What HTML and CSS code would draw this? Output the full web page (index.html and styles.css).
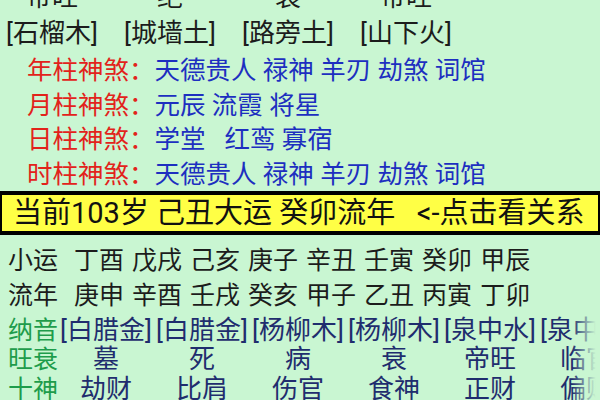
FILE: index.html
```html
<!DOCTYPE html>
<html lang="zh-CN">
<head>
<meta charset="utf-8">
<link rel="stylesheet" href="styles.css">
</head>
<body>
<div class="page">
  <div class="cols cols-top">
    <span>帝旺</span><span>绝</span><span>衰</span><span>帝旺</span>
  </div>
  <div class="cols cols-nayin">
    <span>[石榴木]</span><span>[城墙土]</span><span>[路旁土]</span><span>[山下火]</span>
  </div>

  <div class="shensha">
    <div class="ss-row"><span class="ss-label">年柱神煞：</span><span class="ss-val">天德贵人 禄神 羊刃 劫煞 词馆</span></div>
    <div class="ss-row"><span class="ss-label">月柱神煞：</span><span class="ss-val">元辰 流霞 将星</span></div>
    <div class="ss-row"><span class="ss-label">日柱神煞：</span><span class="ss-val">学堂&nbsp;&nbsp; 红鸾 寡宿</span></div>
    <div class="ss-row"><span class="ss-label">时柱神煞：</span><span class="ss-val">天德贵人 禄神 羊刃 劫煞 词馆</span></div>
  </div>

  <div class="band">当前103岁 己丑大运 癸卯流年&nbsp;&nbsp; &lt;-点击看关系</div>

  <div class="seq seq-first">
    <span class="seq-label">小运</span><span>丁酉</span><span>戊戌</span><span>己亥</span><span>庚子</span><span>辛丑</span><span>壬寅</span><span>癸卯</span><span>甲辰</span>
  </div>
  <div class="seq">
    <span class="seq-label">流年</span><span>庚申</span><span>辛酉</span><span>壬戌</span><span>癸亥</span><span>甲子</span><span>乙丑</span><span>丙寅</span><span>丁卯</span>
  </div>

  <div class="table-wrap">
    <div class="trow">
      <span class="tlabel">纳音</span><span>[白腊金]</span><span>[白腊金]</span><span>[杨柳木]</span><span>[杨柳木]</span><span>[泉中水]</span><span>[泉中水]</span>
    </div>
    <div class="trow">
      <span class="tlabel">旺衰</span><span>墓</span><span>死</span><span>病</span><span>衰</span><span>帝旺</span><span>临官</span>
    </div>
    <div class="trow">
      <span class="tlabel">十神</span><span>劫财</span><span>比肩</span><span>伤官</span><span>食神</span><span>正财</span><span>偏财</span>
    </div>
  </div>
</div>
</body>
</html>
```

FILE: styles.css
```css
html, body {
  margin: 0;
  padding: 0;
}
body {
  width: 600px;
  height: 400px;
  overflow: hidden;
  background: #c9f6d2;
  font-family: Roboto, "Noto Sans CJK SC", sans-serif;
  color: #1c1c1c;
}
.page {
  display: flex;
  flex-direction: column;
}
.cols {
  display: grid;
  grid-template-columns: repeat(4, 104px);
  column-gap: 14px;
  font-size: 26px;
  line-height: 36px;
  white-space: nowrap;
}
.cols span {
  text-align: center;
}
.cols-top {
  margin-top: -21px;
}
.shensha {
  margin-top: 2px;
  padding-left: 27px;
  font-size: 25.5px;
  line-height: 34.5px;
  white-space: nowrap;
}
.ss-label {
  color: #e2231b;
}
.ss-val {
  color: #1d2fc0;
}
.band {
  background: #ffff45;
  border-top: 4px solid #000;
  border-bottom: 4px solid #000;
  border-left: 2px solid #000;
  border-right: 2px solid #000;
  height: 36px;
  line-height: 36px;
  padding-left: 11px;
  font-size: 29px;
  white-space: nowrap;
  color: #111;
}
.seq {
  display: flex;
  gap: 8px;
  padding-left: 8px;
  font-size: 25px;
  line-height: 35px;
  white-space: nowrap;
}
.seq-first {
  margin-top: 7.5px;
}
.seq-label {
  margin-right: 8px;
}
.table-wrap {
  position: relative;
  margin-top: 3px;
}
.table-wrap::after {
  content: "";
  position: absolute;
  top: 0;
  right: 0;
  bottom: 0;
  width: 28px;
  background: linear-gradient(to right, rgba(201, 246, 210, 0), #c9f6d2 85%);
}
.trow {
  display: grid;
  grid-template-columns: 50px repeat(6, 96px);
  padding-left: 8px;
  font-size: 26px;
  line-height: 29.5px;
  white-space: nowrap;
  color: #1f2d6e;
}
.trow span {
  text-align: center;
}
.trow .tlabel {
  text-align: left;
  font-size: 25px;
  color: #1e9c4b;
}
```
